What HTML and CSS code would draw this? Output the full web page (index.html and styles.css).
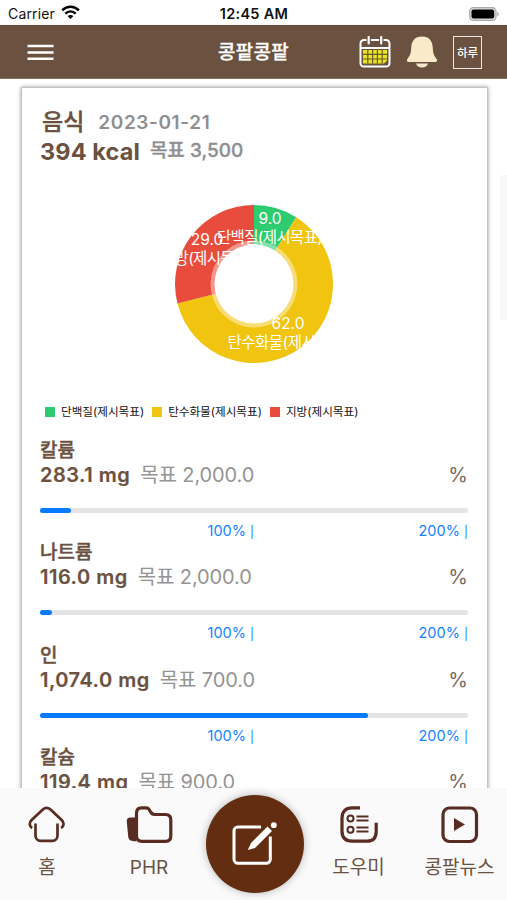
FILE: index.html
```html
<!DOCTYPE html>
<html lang="ko">
<head>
<meta charset="utf-8">
<title>콩팥콩팥</title>
<link rel="stylesheet" href="styles.css">
</head>
<body>
<div class="app">
  <div class="status">
    <div class="carrier"><span>Carrier</span>
      <svg width="19" height="15" viewBox="0 0 19 15" fill="none" stroke="#000" stroke-width="2.5"><path d="M1.2 5.3C6 .5 13 .5 17.8 5.3"/><path d="M4.3 8.7c3.1-2.9 7.3-2.9 10.4 0"/><path d="M9.5 14 6.6 11c1.7-1.5 4.1-1.5 5.8 0z" fill="#000" stroke="none"/></svg>
    </div>
    <div class="time">12:45 AM</div>
    <svg class="battery" width="31" height="14" viewBox="0 0 31 14"><rect x=".7" y=".7" width="26.3" height="12.6" rx="3.6" fill="#ddd" stroke="#aaa" stroke-width="1.2"/><rect x="2.5" y="2.5" width="22.7" height="9" rx="2" fill="#000"/><path d="M28.3 4.7c2 .6 2 4 0 4.6z" fill="#aaa"/></svg>
  </div>
  <header class="header">
    <svg class="menu" width="27" height="17" viewBox="0 0 27 17" stroke="#fff" stroke-width="2.6"><path d="M.5 2h26M.5 8.5h26M.5 14.7h26"/></svg>
    <h1>콩팥콩팥</h1>
    <div class="actions">
      <svg width="32" height="32" viewBox="0 0 32 32"><path d="M7.5 3.900H5A3.500 3.500 0 0 0 1.500 7.400v20A3.200 3.200 0 0 0 4.700 30.600h22.600a3.200 3.200 0 0 0 3.200-3.200v-20A3.500 3.500 0 0 0 27 3.900h-2.500M12 3.900h8M1.500 12h29" fill="none" stroke="#fff" stroke-width="2"/><path d="M9.700 1v6.500M22.200 1v6.500" stroke="#fff" stroke-width="2.200" stroke-linecap="round"/><path d="M4 14h24v10.500l-3 3H4z" fill="#e9e51f"/><path d="M8.800 14v13.500M13.600 14v13.500M18.400 14v13.500M23.200 14v13.500M4 18.400h24M4 23h24" stroke="#695a28" stroke-width="1.200"/></svg>
      <svg width="32" height="32" viewBox="0 0 32 32" fill="#faebc8"><path d="M16 .6C8.500.6 5.500 5.400 5.200 12c-.3 5.800-1.300 7.700-3.600 10.700-1.400 1.800-.8 3.400 1.500 3.400h25.800c2.300 0 2.900-1.600 1.500-3.400-2.300-3-3.300-4.900-3.600-10.700C26.500 5.400 23.500.6 16 .6z"/><path d="M10 27.500h12c-.6 2.800-3 4-6 4s-5.400-1.200-6-4z"/></svg>
      <div class="day">하루</div>
    </div>
  </header>
  <main class="content">
    <section class="card">
      <div class="food"><b>음식</b><span>2023-01-21</span></div>
      <div class="energy"><b>394 kcal</b><span>목표 3,500</span></div>
      <svg class="chart" width="180" height="180" viewBox="0 0 180 180">
        <path d="M90 90V11A79 79 0 0 1 132.300 23.300z" fill="#2ecc71"/>
        <path d="M90 90 132.300 23.300A79 79 0 1 1 13.500 109.600z" fill="#f1c40f"/>
        <path d="M90 90 13.500 109.600A79 79 0 0 1 90 11z" fill="#e74c3c"/>
        <circle cx="90" cy="90" r="43.500" fill="#fff" fill-opacity=".42"/><circle cx="90" cy="90" r="39.500" fill="#fff"/>
        <g class="slice-text"><text x="106" y="29.500">9.0</text><text x="106" y="49" textLength="106">단백질(제시목표)</text><text x="124" y="134.500">62.0</text><text x="124" y="154" textLength="121">탄수화물(제시목표)</text><text x="43" y="50.500">29.0</text><text x="43" y="69.500" textLength="92">지방(제시목표)</text></g>
      </svg>
      <div class="legend"><span class="protein">단백질(제시목표)</span><span class="carb">탄수화물(제시목표)</span><span class="fat">지방(제시목표)</span></div>
      <div class="nutrient"><div class="name">칼륨</div><div class="amount"><b>283.1 mg</b><span>목표 2,000.0</span><i>%</i></div><div class="track"><div class="fill" style="width:7.2%"></div></div><div class="scale"><span>100% <em>|</em></span><span>200% <em>|</em></span></div></div>
      <div class="nutrient"><div class="name">나트륨</div><div class="amount"><b>116.0 mg</b><span>목표 2,000.0</span><i>%</i></div><div class="track"><div class="fill" style="width:2.9%"></div></div><div class="scale"><span>100% <em>|</em></span><span>200% <em>|</em></span></div></div>
      <div class="nutrient"><div class="name">인</div><div class="amount"><b>1,074.0 mg</b><span>목표 700.0</span><i>%</i></div><div class="track"><div class="fill" style="width:76.7%"></div></div><div class="scale"><span>100% <em>|</em></span><span>200% <em>|</em></span></div></div>
      <div class="nutrient"><div class="name">칼슘</div><div class="amount"><b>119.4 mg</b><span>목표 900.0</span><i>%</i></div></div>
    </section>
    <div class="scrollbar"></div>
  </main>
  <nav class="tabs">
    <div class="tab"><svg width="38" height="38" viewBox="0 0 38 38"><path d="M7.500 17.500v12.300a5 5 0 0 0 5 5h12a5 5 0 0 0 5-5V17.500M4.200 22C1.400 20.400.9 16.800 3.400 14.300L14.800 3.600c2.700-2.400 5-2.400 7.700 0l11.400 10.700c2.500 2.500 2 6.100-.8 7.700"/></svg><span>홈</span></div>
    <div class="tab phr"><svg width="48" height="38" viewBox="0 0 48 38"><path d="M10 11.500H5.500q-4 0-3.700 4l1.400 15c.5 4 2.500 4.700 8 4.700z" fill="#582c22" stroke="none"/><path d="M11.500 7.200Q11.500 1.800 16.500 1.800h4c3 0 3.400 1 5 4 1 2 1.700 2.700 4 2.700h11q5.300 0 5.300 5.500v16q0 5.300-5.300 5.300h-23.500q-5.500 0-5.500-5.300z" fill="#fafafa"/></svg><span>PHR</span></div>
    <div class="tab write"><div class="circle"><svg width="46" height="46" viewBox="0 0 46 46"><path d="M29 6H6a4 4 0 0 0-4 4v28.300a4 4 0 0 0 4 4h28.300a4 4 0 0 0 4-4V15.500"/><path d="M15.800 29 19 22 35.500 5.500l4.500 4.500-17 17z" fill="#fff" stroke="none"/><circle cx="41.800" cy="4.200" r="2.900" fill="#fff" stroke="none"/></svg></div></div>
    <div class="tab"><svg width="38" height="38" viewBox="0 0 38 38"><path d="M20 1.900H12C5.500 1.900 2 5.500 2 12v13c0 6.500 3.500 10.200 10 10.200h15c6.500 0 9.200-3.500 9.200-10v-8.500"/><g stroke-width="2"><circle cx="10.500" cy="12.500" r="3"/><circle cx="10.500" cy="23.700" r="3"/><path d="M16.500 10.500h12M16.500 14.500h12M16.500 21.500h12M16.500 25.500h12"/></g></svg><span>도우미</span></div>
    <div class="tab"><svg width="38" height="38" viewBox="0 0 38 38"><rect x="2" y="2" width="33.500" height="33.500" rx="6.500"/><path d="M13 12v13l11-6.500z" fill="#582c22" stroke="none"/></svg><span>콩팥뉴스</span></div>
  </nav>
</div>
</body>
</html>
```
FILE: styles.css
```css
* { box-sizing: border-box; }
body { margin: 0; background: #fff; font-family: Inter, "Noto Sans CJK KR", sans-serif; color: #6b513f; }
svg { display: block; flex: none; }
.app { height: 900px; display: flex; flex-direction: column; overflow: hidden; }
.status { height: 25px; flex: none; display: grid; grid-template-columns: 1fr auto 1fr; align-items: center; padding: 2px 7px 0 8px; color: #111; font-size: 14px; line-height: 20px; }
.carrier { display: flex; gap: 6px; align-items: center; letter-spacing: .15px; }
.carrier svg { margin-top: -2px; }
.time { font-weight: 600; font-size: 14.500px; letter-spacing: .3px; }
.battery { justify-self: end; }
.header { height: 54px; flex: none; background: #6b513f; display: grid; grid-template-columns: 1fr auto 1fr; align-items: center; padding: 0 25px 0 27px; border-top: 1px solid #64482f; border-bottom: 1px solid #83705c; color: #fff; }
.header h1 { margin: 2px 0 0 -2px; font-size: 19px; font-weight: 500; line-height: 28px; letter-spacing: .3px; -webkit-text-stroke: .3px; }
.actions { display: flex; justify-content: flex-end; align-items: center; gap: 15px; }
.day { width: 29px; height: 33px; border: 1.500px solid #eee5dd; font-size: 11.500px; font-weight: 500; line-height: 32px; text-align: center; letter-spacing: -.1px; }
.content { flex: 1; min-height: 0; overflow: hidden; padding: 8px 19px 0 21px; position: relative; }
.card { height: 760px; padding: 20px 19px 20px 18px; border: 1px solid #c4c4c4; box-shadow: 0 0 4px #999; }
.food { height: 28px; display: flex; align-items: center; padding-left: 2px; gap: 14px; }
.food b { font-size: 23px; font-weight: 500; line-height: 28px; -webkit-text-stroke: .4px; }
.food span { color: #8e8e90; font-size: 19px; font-weight: 600; letter-spacing: .6px; }
.energy { height: 30px; display: flex; align-items: center; gap: 10px; white-space: nowrap; }
.energy b { font-size: 23.500px; font-weight: 700; letter-spacing: .1px; }
.energy span { color: #8e8e90; font-size: 19px; font-weight: 500; line-height: 26px; -webkit-text-stroke: .3px; }
.chart { margin: 28px auto 0; }
.slice-text { fill: #fff; font-size: 15.500px; text-anchor: middle; }
.legend { height: 20px; margin: 28px 0 15px 5px; display: flex; align-items: center; gap: 8px; font-size: 11.600px; line-height: 20px; color: #111; white-space: nowrap; }
.legend span { display: flex; align-items: center; gap: 6px; }
.legend span::before { content: ""; width: 10px; height: 10px; background: #2ecc71; }
.legend .carb::before { background: #f1c40f; }
.legend .fat::before { background: #e74c3c; }
.nutrient { height: 102.300px; }
.name { height: 25px; line-height: 27px; font-size: 19px; font-weight: 500; -webkit-text-stroke: .4px; }
.amount { height: 26px; display: flex; align-items: center; gap: 10px; white-space: nowrap; line-height: 26px; }
.amount b { font-size: 20px; font-weight: 600; letter-spacing: .5px; -webkit-text-stroke: .2px; }
.amount span { font-size: 20px; color: #949494; letter-spacing: -.1px; }
.amount i { font-style: normal; font-size: 20px; margin-left: auto; color: #786b60; }
.track { margin-top: 20px; height: 5px; border-radius: 3px; background: #e4e4e4; }
.fill { height: 5px; border-radius: 3px; background: #087aff; }
.scale { display: grid; grid-template-columns: 1fr 1fr; text-align: right; color: #1583ff; font-size: 14.500px; line-height: 20px; margin-top: 8px; }
.scale em { font-style: normal; font-size: 12px; }
.scrollbar { position: absolute; right: 0; top: 96px; width: 7px; height: 145px; border-radius: 4px 0 0 4px; background: #f8f8f8; }
.tabs { position: relative; height: 112px; flex: none; background: #fafafa; display: grid; grid-template-columns: 94px 110px 101px 107px 95px; }
.tab { display: flex; flex-direction: column; align-items: center; padding-top: 18px; gap: 11px; font-size: 19px; line-height: 26px; white-space: nowrap; }
.tab > svg { fill: none; stroke: #582c22; stroke-width: 3.200; }
.tab:first-child > svg { stroke-width: 2.700; }
.write { padding-top: 7px; }
.circle { width: 98px; height: 98px; border-radius: 50%; background: #622d10; box-shadow: 0 0 9px rgba(0,0,0,.28); display: grid; place-items: center; }
.circle svg { fill: none; stroke: #fff; stroke-width: 3; }
```
